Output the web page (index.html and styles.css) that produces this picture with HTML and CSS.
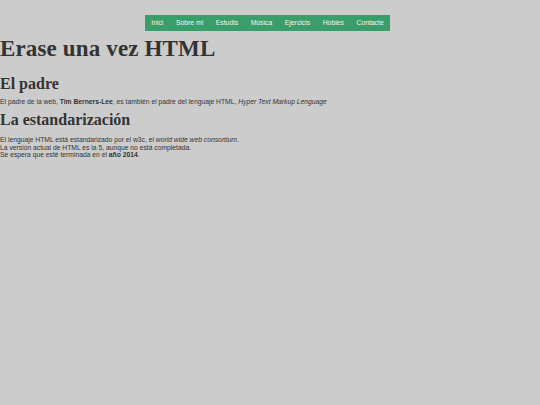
FILE: index.html
```html
<!DOCTYPE html>
<html lang="es">
<head>
<meta charset="utf-8">
<title>Erase una vez HTML</title>
<link rel="stylesheet" href="styles.css">
</head>
<body>
<nav class="menu">
  <ul class="menu-list">
    <li><a href="#">Inici</a></li>
    <li><a href="#">Sobre mi</a></li>
    <li><a href="#">Estudis</a></li>
    <li><a href="#">Música</a></li>
    <li><a href="#">Ejercicis</a></li>
    <li><a href="#">Hobies</a></li>
    <li><a href="#">Contacte</a></li>
  </ul>
</nav>
<h1 class="title">Erase una vez HTML</h1>
<h2 class="subtitle first">El padre</h2>
<p class="text">El padre de la web, <strong>Tim Berners-Lee</strong>, es también el padre del lenguaje HTML, <em>Hyper Text Markup Lenguage</em></p>
<h2 class="subtitle second">La estandarización</h2>
<p class="text last">El lenguaje HTML está estandarizado por el w3c, el <em>world wide web consortium</em>.<br>La versión actual de HTML es la 5, aunque no está completada.<br>Se espera que esté terminada en el <strong>año 2014</strong>.</p>
</body>
</html>
```
FILE: styles.css
```css
html, body {
  margin: 0;
  padding: 0;
  background: #cccccc;
}
body {
  color: #333333;
  font-family: "Liberation Sans", Arial, sans-serif;
  font-size: 6.75px;
}
.menu {
  display: flex;
  justify-content: center;
  padding-top: 15px;
}
.menu-list {
  display: flex;
  list-style: none;
  margin: 0 5px 0 0;
  padding: 0;
  background: #3a9e6a;
}
.menu-list a {
  display: block;
  padding: 0 6.3px;
  line-height: 16px;
  color: #f4f4f4;
  text-decoration: none;
  font-size: 6.8px;
}
.title {
  font-family: "Liberation Serif", Georgia, serif;
  font-size: 23px;
  font-weight: bold;
  letter-spacing: 0.15px;
  margin: 6.25px 0 0 0;
  line-height: 24px;
}
.subtitle {
  font-family: "Liberation Serif", Georgia, serif;
  font-size: 16px;
  font-weight: bold;
  line-height: 18px;
  margin: 13.35px 0 0 0;
}
.subtitle.second {
  margin-top: 5.8px;
}
.text {
  margin: 5.2px 0 0 0;
  line-height: 7.5px;
}
.text.last {
  margin-top: 7.3px;
}
```
